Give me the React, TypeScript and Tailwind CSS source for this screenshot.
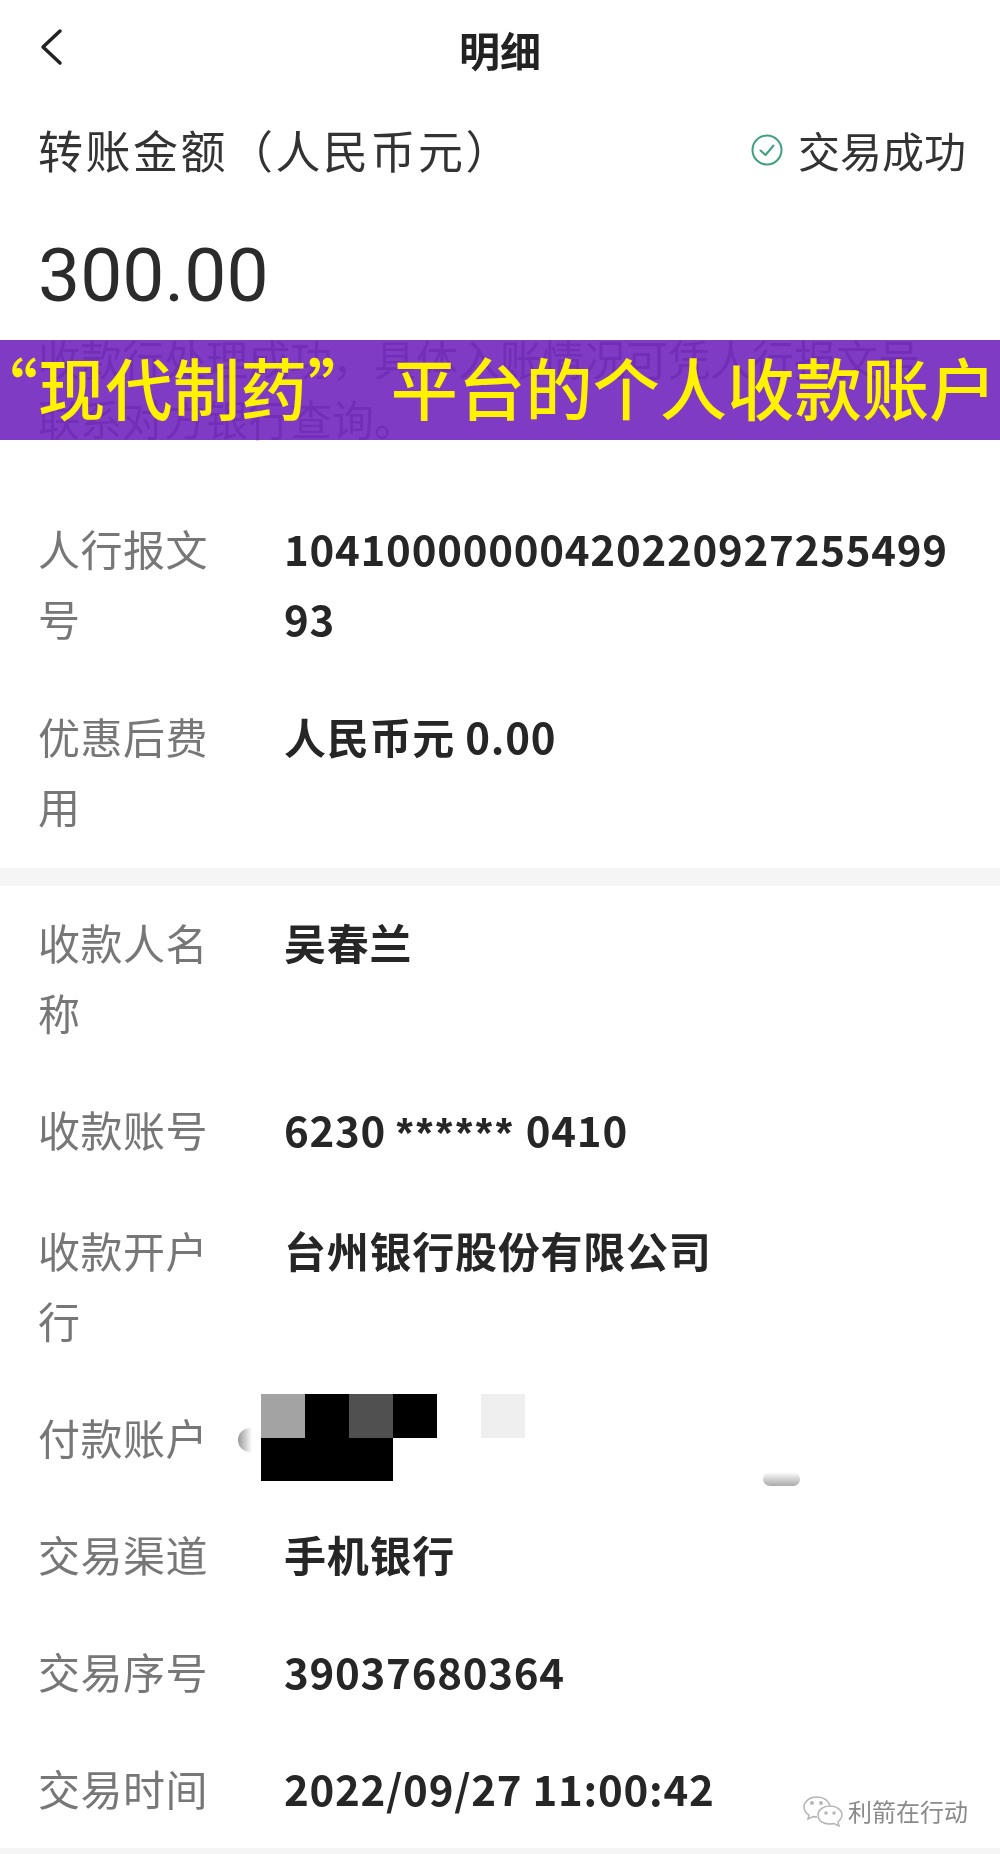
import type { ReactNode } from "react";

const font = { fontFamily: '"Noto Sans CJK SC", "Noto Sans", sans-serif' };

interface Row {
  label: string;
  value?: ReactNode;
}

const topRows: Row[] = [
  { label: "人行报文号", value: "1041000000042022092725549993" },
  { label: "优惠后费用", value: "人民币元 0.00" },
];

const bottomRows: Row[] = [
  { label: "收款人名称", value: "吴春兰" },
  {
    label: "收款账号",
    value: (
      <>
        6230{" "}
        <span className="tracking-[3.5px]" style={{ fontFamily: '"Liberation Sans", sans-serif' }}>
          ******
        </span>{" "}
        0410
      </>
    ),
  },
  { label: "收款开户行", value: "台州银行股份有限公司" },
  { label: "付款账户" },
  { label: "交易渠道", value: "手机银行" },
  { label: "交易序号", value: "39037680364" },
  { label: "交易时间", value: "2022/09/27 11:00:42" },
];

function DetailRow({ row }: { row: Row }) {
  return (
    <div className="relative flex">
      <div className="w-[246px] shrink-0 pr-[70px] text-[42px] leading-[70px] tracking-[0.5px] text-[#777777]">{row.label}</div>
      {row.value ? (
        <div className="w-[670px] break-all text-[42px] leading-[70px] font-bold tracking-[0.75px] text-[#262626]">{row.value}</div>
      ) : (
        <div className="h-[70px]" />
      )}
      {!row.value && (
        <>
          {/* 打码区域 */}
          <div className="absolute left-[223px] top-[-8px] grid grid-cols-[repeat(6,44px)] grid-rows-[44px_43px]">
            <div className="bg-[#a3a3a3]" />
            <div className="bg-black" />
            <div className="bg-[#505050]" />
            <div className="bg-black" />
            <div />
            <div className="bg-[#efefef]" />
            <div className="col-span-3 bg-black" />
          </div>
          <div className="absolute left-[200px] top-[26px] h-[24px] w-[14px] rounded-l-full bg-gradient-to-r from-[#999999] to-white" />
          <div className="absolute left-[725px] top-[70px] h-[14px] w-[37px] rounded-full bg-gradient-to-b from-white to-[#aaaaaa]" />
        </>
      )}
    </div>
  );
}

export default function App() {
  return (
    <div className="relative h-[1854px] w-[1000px] overflow-hidden bg-white blur-[0.5px]" style={font}>
      {/* 顶部导航 */}
      <div className="relative flex h-[98px] items-center justify-center">
        <svg className="absolute left-[38px] top-[28px]" width="26" height="38" viewBox="0 0 26 38" fill="none">
          <path d="M22 3 L5 19 L22 35" stroke="#222222" strokeWidth="3.5" strokeLinecap="round" strokeLinejoin="round" />
        </svg>
        <span className="text-[41px] leading-none font-bold text-[#222222]">明细</span>
      </div>

      {/* 金额 */}
      <div className="flex h-[104px] items-center justify-between pr-[34px] pl-[38px]">
        <span className="text-[45px] tracking-[2.5px] text-[#333333]">转账金额（人民币元）</span>
        <div className="flex items-center gap-[15px]">
          <svg width="32" height="32" viewBox="0 0 32 32" fill="none">
            <circle cx="16" cy="16" r="14.5" stroke="#3f9f80" strokeWidth="2" />
            <path d="M9.5 16.500 L14.500 21 L22.500 11.500" stroke="#3f9f80" strokeWidth="2" strokeLinecap="round" strokeLinejoin="round" />
          </svg>
          <span className="text-[42px] leading-none text-[#333333]">交易成功</span>
        </div>
      </div>
      <div className="flex h-[138px] items-center pt-[8px] pl-[38px] text-[75px] leading-none text-[#2b2b2b]" style={{ fontFamily: "Roboto, sans-serif" }}>
        300.00
      </div>

      {/* 提示文字和横幅 */}
      <div className="relative flow-root h-[100px]">
        <p className="-mt-[12px] w-[960px] pl-[38px] text-[42px] leading-[60px] text-[#777777]">
          收款行处理成功，具体入账情况可凭人行报文号联系对方银行查询。
        </p>
        <div className="absolute inset-x-0 top-0 flex h-[100px] items-center overflow-hidden bg-[#7226bf]/90 pb-[10px] pl-[6px] text-[67px] leading-none font-medium tracking-[0.3px] whitespace-nowrap text-[#fff200]">
          <span className="-ml-[35px]">“</span>
          现代制药
          <span className="mr-[16px]">”</span>
          平台的个人收款账户
        </div>
      </div>

      <div className="flex flex-col gap-[48px] px-[38px] pt-[73px]">
        {topRows.map((r) => (
          <DetailRow key={r.label} row={r} />
        ))}
      </div>

      <div className="mt-[27px] h-[18px] bg-[#f5f5f5]" />

      <div className="flex flex-col gap-[47px] px-[38px] pt-[21px]">
        {bottomRows.map((r) => (
          <DetailRow key={r.label} row={r} />
        ))}
      </div>

      {/* 公众号水印 */}
      <div className="absolute top-[1795px] left-[803px] flex items-center gap-[5px]">
        <svg width="40" height="32" viewBox="0 0 40 32" fill="none" stroke="#b5b5b5" strokeWidth="1.5">
          <path d="M14 2 C6 2 1 7 1 12 C1 15 3 18 6 20 L5 24 L10 21.500 C11 22 12.500 22 14 22" />
          <path d="M14 2 C21 2 26 6 27 11" />
          <path d="M27 11 C34 11 39 15 39 20 C39 23 37 25 35 27 L36 31 L31 28.500 C24 30 15 28 15 20 C15 15 20 11 27 11 Z" />
          <circle cx="9" cy="8" r="1.2" fill="#b5b5b5" />
          <circle cx="18" cy="8" r="1.2" fill="#b5b5b5" />
          <circle cx="23" cy="18" r="1" fill="#b5b5b5" />
          <circle cx="31" cy="18" r="1" fill="#b5b5b5" />
        </svg>
        <span className="text-[24px] leading-none text-[#8a8a8a]">利箭在行动</span>
      </div>

      <div className="absolute inset-x-0 bottom-0 h-[6px] bg-[#f5f5f5]" />
    </div>
  );
}
